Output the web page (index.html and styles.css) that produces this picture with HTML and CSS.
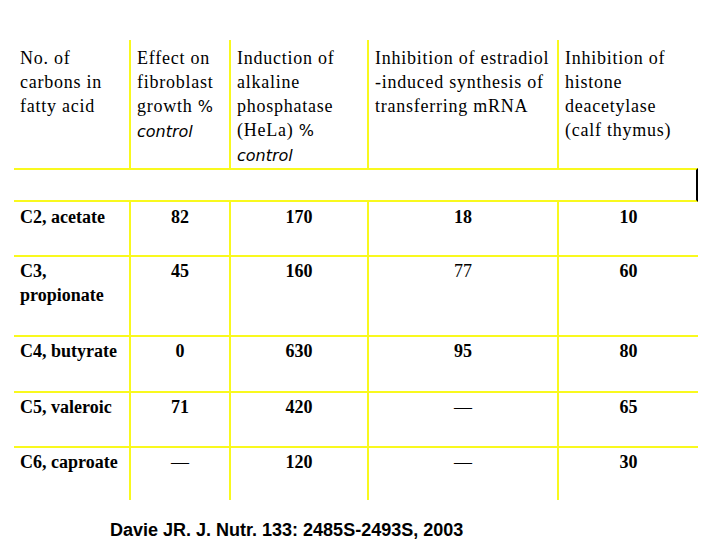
FILE: index.html
```html
<!DOCTYPE html>
<html>
<head>
<meta charset="utf-8">
<link rel="stylesheet" href="styles.css">
</head>
<body>
<main class="slide">
  <table class="data">
    <colgroup>
      <col class="c1"><col class="c2"><col class="c3"><col class="c4"><col class="c5">
    </colgroup>
    <thead>
      <tr class="head">
        <th class="vr">No. of<br>carbons in<br>fatty acid</th>
        <th class="vr">Effect on<br>fibroblast<br>growth <span class="sans">%</span><br><span class="sans it">control</span></th>
        <th class="vr">Induction of<br>alkaline<br>phosphatase<br>(HeLa) <span class="sans">%</span><br><span class="sans it">control</span></th>
        <th class="vr">Inhibition of estradiol<br>-induced synthesis of<br>transferring mRNA</th>
        <th>Inhibition of<br>histone<br>deacetylase<br>(calf thymus)</th>
      </tr>
    </thead>
    <tbody>
      <tr class="spacer"><td colspan="5"></td></tr>
      <tr class="r1">
        <td class="vr hb name">C2, acetate</td>
        <td class="vr hb num">82</td>
        <td class="vr hb num">170</td>
        <td class="vr hb num">18</td>
        <td class="hb num">10</td>
      </tr>
      <tr class="r2">
        <td class="vr hb name">C3,<br>propionate</td>
        <td class="vr hb num">45</td>
        <td class="vr hb num">160</td>
        <td class="vr hb num light">77</td>
        <td class="hb num">60</td>
      </tr>
      <tr class="r3">
        <td class="vr hb name">C4, butyrate</td>
        <td class="vr hb num">0</td>
        <td class="vr hb num">630</td>
        <td class="vr hb num">95</td>
        <td class="hb num">80</td>
      </tr>
      <tr class="r4">
        <td class="vr hb name">C5, valeroic</td>
        <td class="vr hb num">71</td>
        <td class="vr hb num">420</td>
        <td class="vr hb num light">—</td>
        <td class="hb num">65</td>
      </tr>
      <tr class="r5">
        <td class="vr name">C6, caproate</td>
        <td class="vr num light">—</td>
        <td class="vr num">120</td>
        <td class="vr num light">—</td>
        <td class="num">30</td>
      </tr>
    </tbody>
  </table>
  <p class="cite">Davie JR. J. Nutr. 133: 2485S-2493S, 2003</p>
</main>
</body>
</html>
```

FILE: styles.css
```css
html, body {
  margin: 0;
  padding: 0;
  background: #ffffff;
}

.slide {
  width: 720px;
  height: 540px;
  padding: 40px 0 0 14px;
  box-sizing: border-box;
  font-family: "Liberation Serif", "Times New Roman", serif;
  color: #000;
}

.data {
  border-collapse: separate;
  border-spacing: 0;
  table-layout: fixed;
  width: 684px;
}

.c1 { width: 117px; }
.c2 { width: 100px; }
.c3 { width: 138px; }
.c4 { width: 190px; }
.c5 { width: 139px; }

.data th,
.data td {
  padding: 0;
  vertical-align: top;
}

.head th {
  height: 126px;
  box-sizing: border-box;
  padding: 6px 0 0 6px;
  text-align: left;
  font-weight: normal;
  font-size: 18px;
  line-height: 24px;
  letter-spacing: 0.75px;
  white-space: nowrap;
}

.sans {
  font-family: "DejaVu Sans", Verdana, sans-serif;
  font-size: 16px;
  letter-spacing: 0;
}

.it {
  font-style: italic;
}

.vr {
  border-right: 2px solid #f9f91e;
}

.hb {
  border-bottom: 2px solid #f9f91e;
}

.data tbody td {
  font-size: 18px;
  line-height: 24px;
  font-weight: bold;
  padding-top: 2px;
  box-sizing: border-box;
}

.data tbody tr.spacer td {
  height: 34px;
  padding: 0;
  border-top: 2px solid #f9f91e;
  border-bottom: 2px solid #f9f91e;
  border-right: 2px solid #000;
}

.data td.name {
  text-align: left;
  padding-left: 6px;
}

.data td.num {
  text-align: center;
}

.data td.light {
  font-weight: normal;
}

.data tbody tr.r1 td { height: 55px; padding-top: 3px; }
.data tbody tr.r2 td { height: 80px; }
.data tbody tr.r3 td { height: 56px; }
.data tbody tr.r4 td { height: 55px; }
.data tbody tr.r5 td { height: 52px; }

.cite {
  margin: 20px 0 0 96px;
  font-family: "Liberation Sans", Arial, sans-serif;
  font-weight: bold;
  font-size: 18px;
  line-height: 20px;
}
```
